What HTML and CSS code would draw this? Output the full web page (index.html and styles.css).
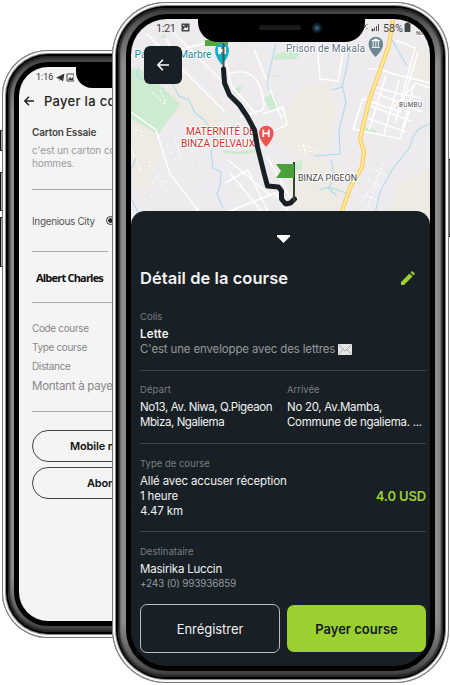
FILE: index.html
```html
<!DOCTYPE html>
<html lang="fr">
<head>
<meta charset="utf-8">
<title>Course</title>
<link rel="stylesheet" href="styles.css">
</head>
<body>
<main class="stage">
  <svg class="keys" viewBox="0 0 450 685" aria-hidden="true">
    <g fill="#aaa" stroke="#111" stroke-width="1">
      <path d="M3 130.500H.5V150.500H3M3 172.500H.5V210.500H3M3 217.500H.5V266.500H3M447 159.500h3V236.500h-3"/>
    </g>
  </svg>

  <section class="phone phone-back">
    <div class="screen pay">
      <div class="notch-small"></div>
      <div class="pay-status"><span>1:16</span>
        <svg width="18" height="9" viewBox="0 0 18 9"><path d="M0 4.800 8.500.5 7 8.500 4.500 6.500 3.500 8V6Z" fill="#333"/><path d="M11 1h7v7h-7z" fill="none" stroke="#444"/><path d="M12 7l2-3 1.500 1.500L17 4v3z" fill="#444"/></svg>
      </div>
      <header class="pay-head">
        <svg width="10" height="10" viewBox="0 0 10 10"><path d="M10 5H1M5 .8.800 5 5 9.200" fill="none" stroke="#222" stroke-width="1.400"/></svg>
        <h2>Payer la course</h2>
      </header>
      <div class="pay-item">
        <h3>Carton Essaie</h3>
        <p>c'est un carton contenant<br>hommes.</p>
      </div>
      <div class="pay-city"><span>Ingenious City</span><i class="radio"></i></div>
      <div class="pay-name">Albert Charles</div>
      <ul class="pay-info">
        <li>Code course</li><li>Type course</li><li>Distance</li><li class="amount">Montant à payer</li>
      </ul>
      <div class="pay-actions">
        <div class="pill pill-a">Mobile money</div>
        <div class="pill pill-b">Abonnement</div>
      </div>
    </div>
  </section>

  <section class="phone phone-front">
    <div class="screen trip">
      <svg class="map" viewBox="131 19 299 205" font-family="Roboto, sans-serif">
        <path fill="#eeebee" d="M131 19h299v205H131z"/>
        <g fill="#eeebe5">
          <path d="M172 78q17-5 25 8t24 12l2 24-20 18-24-24-20-6zM131 120l20 6 12 26-14 36-18 4zM300 90l29-8 8 28-9 40-29 10-22-22 10-30zM285 165l35-8 24 14-8 50h-45zM407 40l23 18v30l-16-8zM399 183l31-14v50h-44z"/>
        </g>
        <g fill="#cdeccf">
          <path d="M131 68l14 3 35 33-18 25-4 5-27-15zM161 39l2-6 4 4zM264 98l9-5 6 14-9 4zM235 89l7-4-2 8-5 1zM276 55l18-8 8 4-6 8-23 1zM295 162l7-3v10l-8 3zM364 127l12 3-1 4-12-3z"/>
          <path d="M223 150q20 3 35-2l-1 4q-18 4-34 1zM270 77l10-2v1l-10 2z"/>
        </g>
        <g fill="none" stroke="#fff" stroke-width="1.500">
          <path d="M131 112l25 18 14 44 30 39M147 34l30 30 48 48M180 50l44-12M177 64l-10-25M172 31l28 28 24 24M224 53l8 34 24 27M225 75q27-10 35 12t0 24l-21 6M254 49l28 70M263 114l20-7 4 18-12 5M317 43l3 36 18 2 5-28M369 69h11l10 4 40 10M364 99l28 10 24-26 14 5M353 129l10-30 37 13 18-60M353 129l47 10 10-30M375 87l25 7 21 4M386 75l-17 55M399 80l-15 54M414 84l-13 51M395 40l20 8-20 75M373 92l49 20M368 105l43 16M364 117l42 15M225 183l23-13 20 42M225 213l50-20 15 21M267 157l23 40M230 173l35 42M228 160l42 35"/>
        </g>
        <g fill="none" stroke="#fff" stroke-width="1" stroke-dasharray="3 2">
          <path d="M298 146l16 2M299 150l18 2M303 143l3 14M371 168l16 8M368 180l16 8M365 195l13 6M383 163l-18 52M377 180l-15 20M152 92l13 12M160 90l6 13M131 150l10 20M157 176l9 18M175 140l6 20M135 130l10 2"/>
        </g>
        <g fill="none" stroke="#fff" stroke-width="1.600" stroke-dasharray="1 7"><path d="M142 135l14 60M150 165l40 40M167 145l26 45M180 130l28 50M136 190l40 16M145 155l30 45M190 150l10 58"/></g>
        <g fill="none" stroke="#add9ed" stroke-width="1.100">
          <path d="M161 77l11 6 7 13 10 4 6 13 8 6 9 11 3 13-4 8 2 17 8 4-1 14-3 8 6 14M142 80l-6-5 3-8M136 158l-5 12v28l8 16M269 90l-2-8 6-26 3-12M349 53l-3 18-4 16-11 3M342 84l4 18-3 12-4 16 1 24-26 2M392 40l15 26M430 124q-17 4-20 23l-18 23-12 22-5 22M331 160l3 15-5 14 7 6M319 190l10-3 17 6"/>
        </g>
        <path d="M393 19l-4 26-20 56-9 38 4 13-2 15-12 21-9 26" fill="none" stroke="#f6cf66" stroke-width="4.400"/>
        <path d="M393 19l-4 26-20 56-9 38 4 13-2 15-12 21-9 26" fill="none" stroke="#ffeaa0" stroke-width="2"/>
        <path d="M205 40h23v6h-23z" fill="#55a83b"/>
        <path d="M222 65q-7-8-7-15a7 7 0 0 1 14 0q0 7-7 15z" fill="#0fb3c6"/>
        <path d="M218 47h3v2h3v-2h2v7h-2v-2h-3v2h-3z" fill="#fff"/>
        <path d="M223.500 43v26" stroke="#555" stroke-width="2"/>
        <g stroke="#fff" stroke-width="2" paint-order="stroke" stroke-linejoin="round">
          <text x="134.500" y="57.500" font-size="10.500" fill="#1e8a97" textLength="77" lengthAdjust="spacingAndGlyphs">Palais du Marbre</text>
          <text x="286" y="51.500" font-size="10" fill="#607080" textLength="79">Prison de Makala</text>
          <text x="186" y="135" font-size="10.500" fill="#d02f29" textLength="69" lengthAdjust="spacingAndGlyphs">MATERNITÉ DE</text>
          <text x="181" y="147" font-size="10.500" fill="#d02f29" textLength="74" lengthAdjust="spacingAndGlyphs">BINZA DELVAUX</text>
          <text x="298" y="181" font-size="9" fill="#444" textLength="59" lengthAdjust="spacingAndGlyphs">BINZA PIGEON</text>
          <text x="399" y="107" font-size="6.500" fill="#444" textLength="23">BUMBU</text>
          <text x="416" y="35" font-size="6" fill="#333">NG</text>
        </g>
        <path d="M223.500 69l1 14 5 12 10 10 8 12 7 13 3 17 7 28 3 11 11 1 3 4v8l4 5 5-1 4-4" fill="none" stroke="#182026" stroke-width="5" stroke-linejoin="round" stroke-linecap="round"/>
        <path d="M294 162v39" stroke="#38403b" stroke-width="2"/>
        <path d="M276 164h18v14h-18l5-7z" fill="#4c9f3b"/>
        <path d="M266 147q-7-8-7-14a7.300 7.300 0 0 1 14.600 0q0 6-7.600 14z" fill="#ee5350"/>
        <path d="M263.300 129.500v7.500m5.500-7.500v7.500m-5.500-3.700h5.500" stroke="#fff" stroke-width="1.700"/>
        <path d="M375.500 57q-7-7-7-13a7.300 7.300 0 0 1 14.600 0q0 6-7.600 13z" fill="#6d8595"/>
        <path d="M371.800 41l4-2.200 4 2.200zM372 47.500h7.600M373.200 42v5m2.600-5v5m2.600-5v5" fill="#fff" stroke="#fff" stroke-width=".9"/>
        <text x="156" y="31.500" font-size="11" fill="#444" textLength="20">1:21</text>
        <path d="M181.500 23.500h8v8h-8z" fill="#444"/><path d="M183 30l2-3 1.500 1.500L188 26v4zM183 25h1.500v1H183z" fill="#eee"/>
        <text x="383" y="31.500" font-size="11" fill="#444" textLength="20" lengthAdjust="spacingAndGlyphs">58%</text>
        <path d="M405 24h1v-1h3v1h1v7.500h-5zM372 31h1v-2h-1zM374.500 31v-3.500M376.500 31v-5M378.500 31v-7" fill="#444" stroke="#444" stroke-width=".9"/>
        <path d="M362 23l4 3-3 3m0-7v8m4-6v1m0 3v1" fill="none" stroke="#555"/>
      </svg>
      <div class="notch"><i class="speaker"></i><i class="camera"></i></div>
      <button class="back" aria-label="Retour"><svg width="12" height="12" viewBox="0 0 12 12"><path d="M12 6H1M6 .8.900 6 6 11.200" fill="none" stroke="#fff" stroke-width="1.600"/></svg></button>

      <div class="sheet">
        <svg class="caret" width="13" height="8" viewBox="0 0 13 8"><path d="M0 0h13v1.500L6.500 8 0 1.500z" fill="#fff"/></svg>
        <div class="title"><h1>Détail de la course</h1>
          <svg width="14" height="14" viewBox="0 0 14 14"><path d="M0 11 8.500 2.500l3 3L3 14H0zM9.500 1.600 11.200 0l2.800 2.800-1.600 1.700z" fill="#9bd030"/></svg>
        </div>
        <div class="block first">
          <small>Colis</small>
          <p class="bold">Lette</p>
          <p class="muted"><span>C'est une enveloppe avec des lettres</span><svg width="14" height="11" viewBox="0 0 14 11"><path d="M0 0h14v11H0z" fill="#e4e6e6"/><path d="M.5 10.500 5 5.500M13.500 10.500 9 5.500M.5.500 7 7 13.500.5" fill="none" stroke="#a9adaf"/></svg></p>
        </div>
        <div class="block pair">
          <div><small class="wide">Départ</small><p class="tight">No13, Av. Niwa, Q.Pigeaon</p><p class="tight">Mbiza, Ngaliema</p></div>
          <div><small>Arrivée</small><p class="snug">No 20, Av.Mamba,</p><p class="snug">Commune de ngaliema. ...</p></div>
        </div>
        <div class="block kind">
          <small>Type de course</small><p>Allé avec accuser réception</p>
          <div class="price"><p>1 heure</p><strong>4.0 USD</strong></div>
          <p>4.47 km</p>
        </div>
        <div class="block last">
          <small>Destinataire</small><p>Masirika Luccin</p><p class="tel">+243 (0) 993936859</p>
        </div>
        <div class="actions"><button class="btn save">Enrégistrer</button><button class="btn go">Payer course</button></div>
      </div>
    </div>
  </section>
</main>
</body>
</html>
```
FILE: styles.css
```css
* { box-sizing: border-box; margin: 0; padding: 0; }
body { background: #fff; font-family: Inter, "Liberation Sans", sans-serif; }
button { font-family: inherit; border: 0; }
.stage { position: relative; width: 450px; height: 685px; overflow: hidden; }
.keys { position: absolute; left: 0; top: 0; width: 450px; height: 685px; }

/* Handset frames overlap one another */
.phone {
  position: absolute; background: #000;
  box-shadow: inset 0 0 0 1px #777, inset 0 0 0 3px #f8f8f8, inset 0 0 0 4px #888;
}
.phone::before {
  content: ""; position: absolute; inset: 6px; border-radius: 47px;
  background: linear-gradient(#3c3c3c, #555 14px, #8c8c8c 56px, #8c8c8c calc(100% - 56px), #555 calc(100% - 14px), #3c3c3c);
  box-shadow: inset 0 0 2px 2px #222;
}
.phone-back { left: 2px; top: 50px; width: 291px; height: 588px; border-radius: 46px; padding: 17px; }
.phone-back::before { border-radius: 40px; }
.phone-front { left: 112px; top: 2px; width: 337px; height: 681px; border-radius: 54px; padding: 17px 19px; }
.screen { position: relative; height: 100%; overflow: hidden; box-shadow: 0 0 0 5px #000; }

/* Payment screen */
.pay { background: #f4f4f4; border-radius: 29px; padding-left: 13px; color: #222; }
.notch-small { position: absolute; left: 57px; top: -2px; width: 143px; height: 23px; background: #000; border-radius: 0 0 16px 16px; }
.pay-status { display: flex; align-items: center; gap: 3px; height: 20px; padding-left: 4px; font: 9px/20px Roboto, sans-serif; color: #333; }
.pay-head { display: flex; align-items: center; gap: 10px; height: 28px; margin-left: -8px; }
.pay-head h2 { font-size: 13px; font-weight: 500; white-space: nowrap; letter-spacing: .3px; }
.pay-item { height: 75px; padding-top: 10px; border-bottom: 1px solid #aaa; }
.pay-item h3 { font-size: 10px; line-height: 14px; font-weight: 600; letter-spacing: -.2px; color: #444; }
.pay-item p { margin-top: 5px; font-size: 10px; line-height: 13px; letter-spacing: -.1px; color: #999; white-space: nowrap; }
.pay-city { display: flex; align-items: center; gap: 11px; width: 76px; height: 62px; border-bottom: 1px solid #aaa; font-size: 10px; white-space: nowrap; color: #555; }
.pay-city span { letter-spacing: -.35px; }
.radio { flex: none; width: 9px; height: 9px; border: 1px solid #333; border-radius: 50%; background: radial-gradient(#222 0 2px, transparent 2.5px); }
.pay-name { height: 51px; padding-left: 4px; border-bottom: 1px solid #aaa; font: bold 11px/52px "Open Sans", sans-serif; letter-spacing: -.8px; color: #111; }
.pay-info { height: 109px; padding-top: 16px; border-bottom: 1px solid #aaa; list-style: none; color: #888; font-size: 10px; line-height: 19px; letter-spacing: -.35px; white-space: nowrap; }
.pay-info .amount { font-size: 11.5px; line-height: 20px; letter-spacing: -.25px; }
.pay-actions { display: grid; gap: 5px; padding: 18px 13px 0 0; }
.pill { height: 32px; border: 1px solid #444; border-radius: 16px; font-size: 11px; line-height: 30px; font-weight: 600; letter-spacing: -.15px; color: #111; }
.pill-a { padding-left: 37px; }
.pill-b { padding-left: 54px; }

/* Trip screen */
.trip { background: #182026; border-radius: 36px; }
.map { display: block; width: 299px; height: 205px; margin-bottom: -13px; }
.notch { position: absolute; left: 67px; top: -2px; width: 167px; height: 25px; display: flex; align-items: center; background: #000; border-radius: 0 0 20px 20px; padding: 0 0 4px 61px; gap: 11px; }
.speaker { width: 42px; height: 5px; border-radius: 3px; background: #191919; }
.camera { width: 10px; height: 10px; border-radius: 50%; background: radial-gradient(circle, #245a70 0 2px, #141c24 3px); }
.back { position: absolute; left: 13px; top: 27px; width: 38px; height: 38px; border-radius: 6px; background: #182026; display: grid; place-items: center; }
.sheet { position: relative; height: 455px; background: #182026; border-radius: 14px 14px 0 0; padding: 24px 4px 0 9px; color: #f2f2f2; }
.caret { display: block; margin-left: 137px; }
.title { display: flex; align-items: center; justify-content: space-between; height: 24px; margin-top: 23px; padding-right: 11px; }
.title h1 { font-size: 16.5px; font-weight: 600; letter-spacing: .05px; white-space: nowrap; }
.block { border-bottom: 1px solid #414349; padding: 12px 0 13px; font-size: 11.5px; line-height: 15px; letter-spacing: -.15px; white-space: nowrap; }
.block.first { padding-top: 20px; }
.block.kind { padding-top: 13px; padding-bottom: 12px; }
.block.last { border: 0; padding: 13px 0 14px; letter-spacing: -.2px; }
small { display: block; font-size: 9.5px; line-height: 14px; margin-bottom: 3px; letter-spacing: 0; color: #7b7d80; }
small.wide { letter-spacing: .1px; }
.bold { font-weight: 600; letter-spacing: .2px; }
.muted { display: flex; align-items: center; gap: 3px; color: #96989a; }
.tight { letter-spacing: -.42px; }
.snug { letter-spacing: -.28px; }
.pair { display: grid; grid-template-columns: 147px 1fr; }
.price { display: flex; height: 15px; justify-content: space-between; }
.price strong { font-size: 13px; font-weight: 600; color: #9bd030; }
.tel { font-size: 10px; line-height: 13px; color: #96989a; }
.actions { display: grid; grid-template-columns: 140px 139px; gap: 7px; align-items: center; }
.btn { height: 49px; border-radius: 7px; font-size: 13px; }
.save { border: 1px solid #bbb; background: transparent; color: #f2f2f2; letter-spacing: -.05px; }
.go { height: 47px; background: #9bd030; color: #111a14; font-weight: 600; }
```
